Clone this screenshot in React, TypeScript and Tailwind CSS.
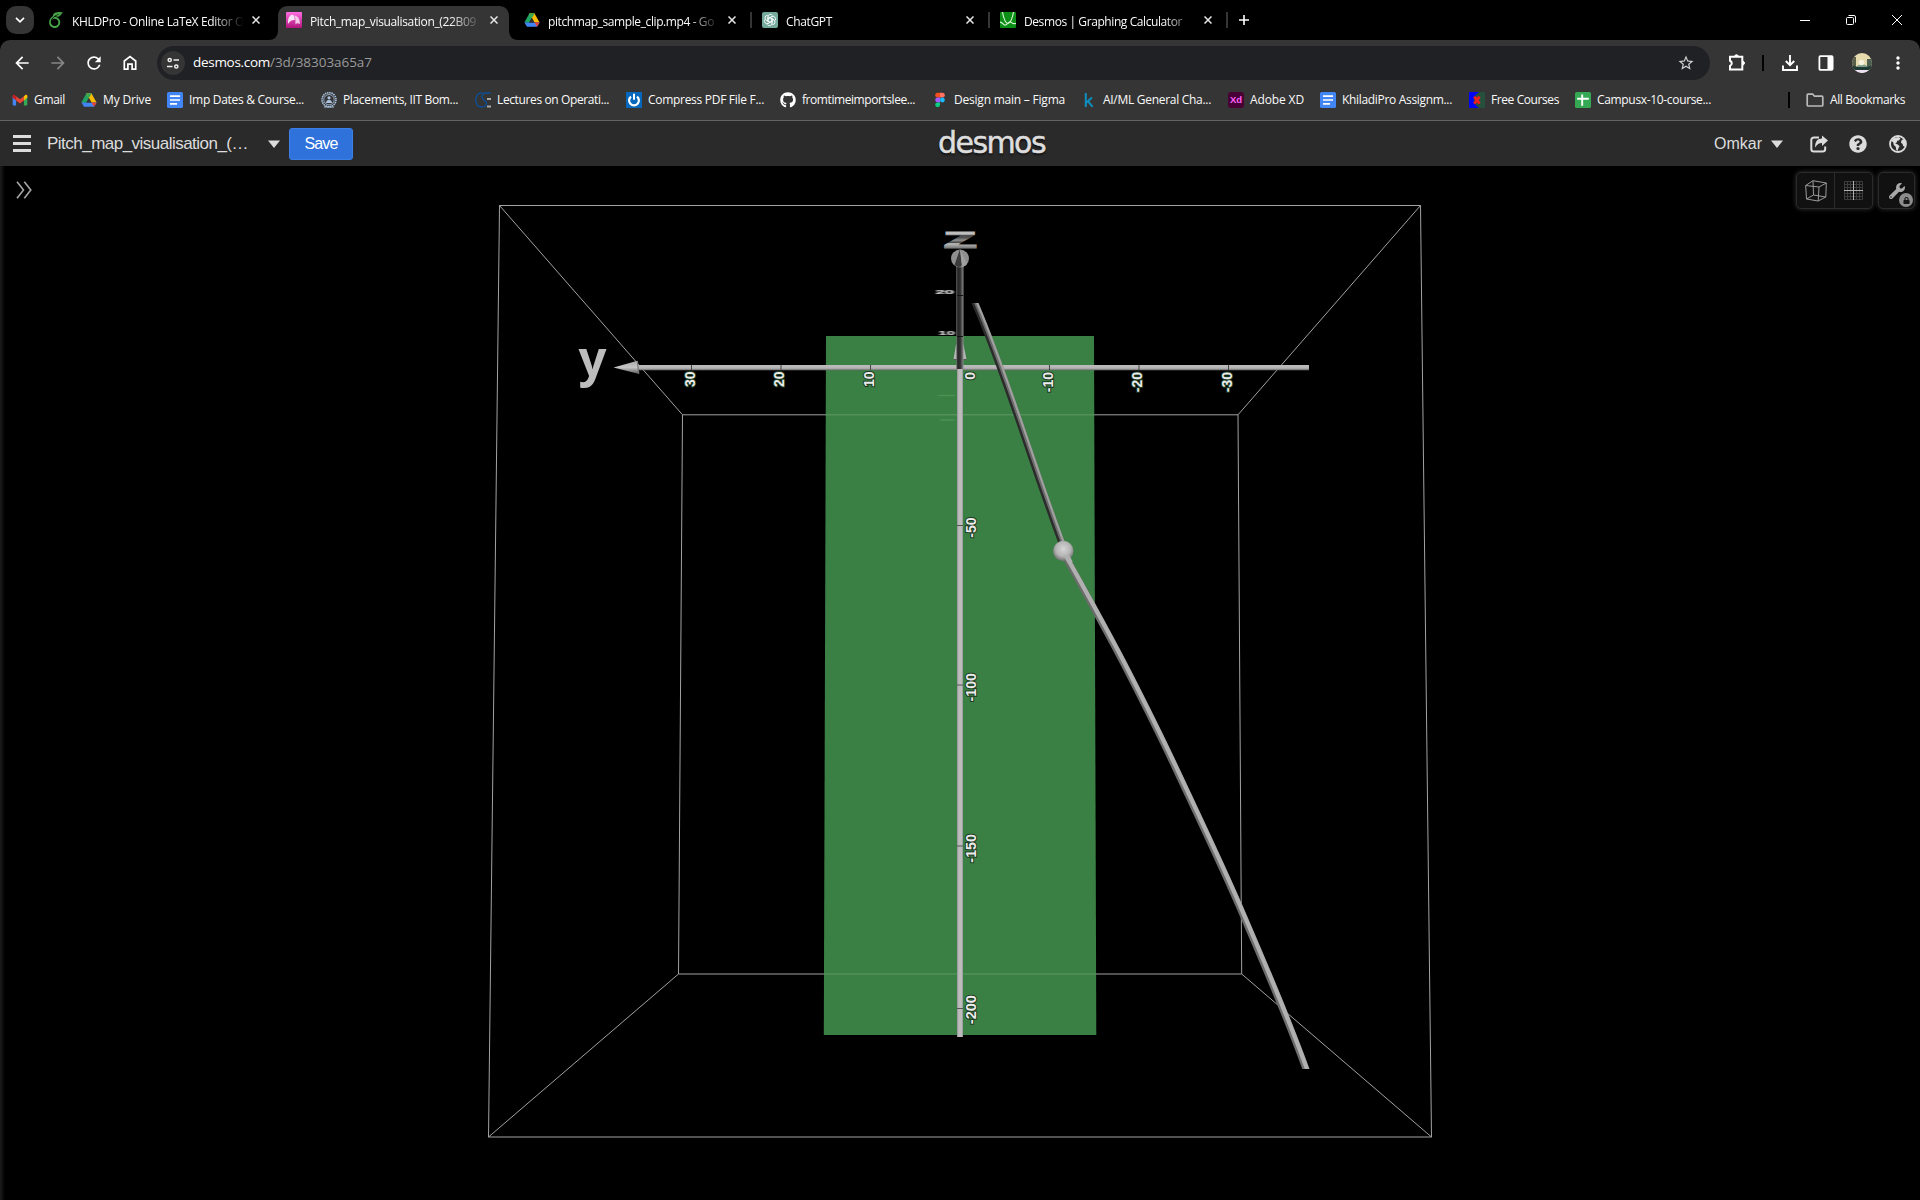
import React, { useLayoutEffect, useRef, useState } from "react";
import { FaGithub, FaQuestionCircle, FaGlobeAmericas, FaWrench, FaLock } from "react-icons/fa";
import { MdArrowBack, MdArrowForward, MdRefresh, MdStarBorder, MdMoreVert } from "react-icons/md";
import { SiOverleaf } from "react-icons/si";

/** Text whose tracking is tuned so that it fills exactly `w` pixels. */
function Fit({ text, w, className = "" }: { text: string; w: number; className?: string }) {
  const ref = useRef<HTMLSpanElement>(null);
  const [ls, setLs] = useState(0);
  useLayoutEffect(() => {
    if (ref.current) setLs((w - ref.current.getBoundingClientRect().width) / text.length);
  }, []);
  return (
    <span ref={ref} className={`inline-block shrink-0 whitespace-pre ${className}`} style={{ letterSpacing: `${ls}px` }}>
      {text}
    </span>
  );
}

function DriveIcon() {
  return (
    <svg viewBox="0 0 16 16" className="size-4">
      <path d="M5.3 1.5h5.2L5 10.8.4 10.6z" fill="#1fa463" />
      <path d="M5.3 1.5h5.2l-2.6 4.4z" fill="#188038" />
      <path d="M10.5 1.5 15.6 10.5h-5.2L5.3 1.5z" fill="#fbbc04" />
      <path d="M5.3 1.5h5.2L8 5.9z" fill="#34a853" />
      <path d="M3 14.8.4 10.5h15.2L13 14.8z" fill="#4285f4" />
      <path d="M10.4 10.5h5.2L13 14.8z" fill="#ea4335" />
      <path d="M5.6 10.5 8 6.2l2.4 4.3z" fill="#353535" />
    </svg>
  );
}

function GmailIcon() {
  return (
    <svg viewBox="0 0 16 16" className="size-4">
      <path d="M.7 4v8.6c0 .6.4 1 1 1h2.4V6.2z" fill="#4285f4" />
      <path d="M15.3 4v8.6c0 .6-.4 1-1 1h-2.4V6.2z" fill="#34a853" />
      <path d="M4.1 4.2v4.3L8 11.4l3.9-2.9V4.2L8 7.2z" fill="#ea4335" />
      <path d="M.7 3.8v1.9l3.4 2.8V4.2L3 3.2C2 2.4.7 2.8.7 3.8z" fill="#c5221f" />
      <path d="M15.3 3.8v1.9l-3.4 2.8V4.2L13 3.2c1-.8 2.3-.4 2.3.6z" fill="#fbbc04" />
    </svg>
  );
}

function DocsIcon() {
  return (
    <svg viewBox="0 0 16 16" className="size-4">
      <rect width="16" height="16" rx="1.6" fill="#4285f4" />
      <path d="M3 4.2h10M3 8h10M3 11.800h7" stroke="#fff" strokeWidth="1.700" />
    </svg>
  );
}

function EmblemIcon() {
  return (
    <svg viewBox="0 0 16 16" className="size-4" fill="none" stroke="#a9c3e0">
      <circle cx="8" cy="7.7" r="7" strokeWidth="1.6" strokeDasharray="1.5 .7" />
      <circle cx="8" cy="7.7" r="5.200" strokeWidth=".8" />
      <circle cx="8" cy="5.8" r="1.6" fill="#a9c3e0" stroke="none" />
      <path d="M5.500 10.500c.5-2.600 4.500-2.600 5 0zM3 15h10" fill="#a9c3e0" strokeWidth="1.1" />
    </svg>
  );
}

function CircuitIcon() {
  return (
    <svg viewBox="0 0 16 16" className="size-4" fill="none">
      <path d="M7.4 1C3 .6.7 4 .8 8c.1 4 2.400 7 6.400 7 3.600-.3 4.800-2.400 4.300-4.400C10.900 8.600 7 8.200 6.900 5c0-2.600 1.700-4 4.100-4h4.800" stroke="#0b4f9c" strokeWidth="1.300" />
      <path d="M12 7h4M12 14.600h4" stroke="#a9a9a9" strokeWidth="2" />
    </svg>
  );
}

function PowerIcon() {
  return (
    <svg viewBox="0 0 16 16" className="size-4" fill="none">
      <rect width="16" height="16" fill="#0668bd" />
      <path d="M5 4.600a4.900 4.900 0 1 0 6 0" stroke="#fff" strokeWidth="2.200" />
      <path d="M8 1.800v6" stroke="#fff" strokeWidth="2" />
    </svg>
  );
}

function FigmaIcon() {
  return (
    <svg viewBox="0 0 16 16" className="size-4">
      <path d="M8 .8H5.600a2.400 2.400 0 0 0 0 4.800H8z" fill="#f24e1e" />
      <path d="M8 .8h2.400a2.400 2.400 0 0 1 0 4.800H8z" fill="#ff7262" />
      <path d="M8 5.600H5.600a2.400 2.400 0 0 0 0 4.800H8z" fill="#a259ff" />
      <circle cx="10.400" cy="8" r="2.400" fill="#1abcfe" />
      <path d="M8 10.400H5.600A2.400 2.400 0 1 0 8 12.800z" fill="#0acf83" />
    </svg>
  );
}

function KaggleIcon() {
  return (
    <svg viewBox="0 0 16 16" className="size-4" fill="none" stroke="#0f8fbf" strokeWidth="2">
      <path d="M4.800 1v14M11 5.600 5.200 10.800M7 9.200l4.600 5.600" />
    </svg>
  );
}

function XdIcon() {
  return (
    <div className="flex size-4 items-center justify-center rounded-[3px] bg-[#470137] font-['Liberation_Sans'] text-[9.500px] leading-none font-bold text-[#ff61f6]">
      Xd
    </div>
  );
}

function CoursesIcon() {
  return (
    <svg viewBox="0 0 16 16" className="size-4">
      <rect width="16" height="16" fill="#24503c" />
      <path d="M0 0h10L6.500 3 4.500 8l2 5 3.500 3H0z" fill="#0206f5" />
      <path d="m5.200 4.600 5.400 7M10.600 4.600l-5.400 7" stroke="#ee2020" strokeWidth="2.700" />
    </svg>
  );
}

function SheetsIcon() {
  return (
    <svg viewBox="0 0 16 16" className="size-4">
      <rect width="16" height="16" rx="1.600" fill="#34a853" />
      <path d="M7.200 2.400v11.400M2.200 6.800h11.600" stroke="#fff" strokeWidth="1.900" />
    </svg>
  );
}

function LotusIcon() {
  return (
    <svg viewBox="0 0 16 16" className="size-4">
      <defs>
        <linearGradient id="lotus" x1="0" y1="0" x2="0" y2="1">
          <stop offset="0" stopColor="#ff6fe0" />
          <stop offset="1" stopColor="#b0147c" />
        </linearGradient>
      </defs>
      <rect width="16" height="16" rx="1" fill="url(#lotus)" />
      <path d="M2 12C1.600 6.500 3.500 3.200 6.200 2.800c2 0 2.300 2.400 2.600 5.400C6.600 7.600 4 8.600 2 12z" fill="#f9e3f4" />
      <path d="M8.300 3.600c3.600.4 5.400 3 5.700 8.400-1.900-1.200-3.400-.8-4.600.4 0-3 .5-6-1.100-8.800z" fill="#f4c9e9" />
    </svg>
  );
}

function GptIcon() {
  return (
    <svg viewBox="0 0 16 16" className="size-4" fill="none">
      <rect width="16" height="16" rx="2" fill="#74aa9c" />
      <g stroke="#fff" strokeWidth=".85">
        {[0, 60, 120, 180, 240, 300].map((a) => (
          <path key={a} transform={`rotate(${a} 8 8)`} d="M6 9.200V5a2.600 2.600 0 0 1 4.900-1.300M6 6.800 9.800 4.600" />
        ))}
      </g>
    </svg>
  );
}

function DesmosIcon() {
  return (
    <svg viewBox="0 0 16 16" className="size-4" fill="none">
      <rect width="16" height="16" rx="1" fill="#0b8f16" />
      <path d="M2.400 0C4 8 6 11.500 7.800 11.500S12 8 13.600 0" stroke="#d4f3cf" strokeWidth="1.200" />
      <path d="M0 10.200c3 0 3 3 5 3s3.400-3.400 5-3.400 2.200 3 6 1.600" stroke="#d4f3cf" strokeWidth="1.200" />
    </svg>
  );
}

const tabs = [
  { icon: <SiOverleaf className="size-4 text-[#46a247]" />, text: "KHLDPro - Online LaTeX Editor O", w: 172, sep: false },
  { icon: <LotusIcon />, text: "Pitch_map_visualisation_(22B09", w: 166, active: true, sep: false },
  { icon: <DriveIcon />, text: "pitchmap_sample_clip.mp4 - Go", w: 166, sep: true },
  { icon: <GptIcon />, text: "ChatGPT", w: 46, sep: true },
  { icon: <DesmosIcon />, text: "Desmos | Graphing Calculator", w: 158, sep: true },
];

function X() {
  return (
    <svg viewBox="0 0 8 8" className="size-2" stroke="#e8e8e8" strokeWidth="1.500">
      <path d="m.5.500 7 7m0-7-7 7" />
    </svg>
  );
}

function TabStrip() {
  return (
    <div className="flex h-10 items-start bg-black">
      <div className="flex w-10 pt-[6px] pl-[6px]">
        <div className="flex h-7 w-7 items-center justify-center rounded-[10px] bg-[#353535]">
          <svg viewBox="0 0 10 6" className="h-[6px] w-[10px]" fill="none" stroke="#fff" strokeWidth="1.700">
            <path d="m1 .8 4 4 4-4" />
          </svg>
        </div>
      </div>
      {tabs.map((t) => (
        <div key={t.text} className="relative h-10 w-[238px] shrink-0 pt-[6px]">
          {t.active && (
            <svg viewBox="0 0 252 34" className="absolute top-[6px] -left-[9px] h-[34px] w-[252px]">
              <path d="M0 34c6 0 9-4 9-10V10C9 4 13 0 19 0h211c6 0 10 4 10 10v14c0 6 3 10 9 10z" fill="#353535" />
            </svg>
          )}
          <div className="relative flex h-[28px] items-center pl-2">
            <span className="w-6 shrink-0">{t.icon}</span>
            <div className="w-[172px] [mask-image:linear-gradient(90deg,#000_140px,transparent_172px)]">
              <Fit text={t.text} w={t.w} className="text-[12px] leading-5 text-[#fafafa]" />
            </div>
            <span className="ml-2"><X /></span>
          </div>
          {t.sep && <span className="absolute top-[12px] right-[2px] h-4 w-[2px] bg-[#353535]" />}
        </div>
      ))}
      <div className="flex h-10 flex-1 items-center pl-[9px]">
        <svg viewBox="0 0 10 10" className="size-[10px]" stroke="#fff" strokeWidth="1.600">
          <path d="M5 0v10M0 5h10" />
        </svg>
      </div>
      <div className="flex h-10 items-center gap-9 pr-[18px]">
        <svg viewBox="0 0 10 10" className="size-[10px]" stroke="#fff"><path d="M0 5.500h10" /></svg>
        <svg viewBox="0 0 10 10" className="size-[10px]" stroke="#fff" fill="none">
          <rect x=".5" y="2.500" width="7" height="7" rx="1" />
          <path d="M2.500.500H8A1.500 1.500 0 0 1 9.500 2v5.500" />
        </svg>
        <svg viewBox="0 0 10 10" className="size-[10px]" stroke="#fff"><path d="m0 0 10 10M10 0 0 10" /></svg>
      </div>
    </div>
  );
}

function Toolbar() {
  return (
    <div className="-mt-px flex h-[47px] items-center">
      <div className="flex w-[157px] items-center pl-3 text-white">
        <MdArrowBack className="mr-4 size-5" />
        <MdArrowForward className="mr-4 size-5 text-[#868686]" />
        <MdRefresh className="mr-4 size-5" />
        <svg viewBox="0 0 20 20" className="size-5" fill="none" stroke="#fff" strokeWidth="1.700">
          <path d="M4.300 16.200V8L10 3.600 15.700 8v8.200h-3.600v-5H7.900v5z" />
        </svg>
      </div>
      <div className="flex h-[34px] w-[1553px] items-center rounded-full bg-[#202124]">
        <div className="ml-1 flex size-6 items-center justify-center rounded-full bg-[#353535]">
          <svg viewBox="0 0 12 12" className="size-3" fill="none" stroke="#eee" strokeWidth="1.500">
            <circle cx="2.700" cy="3" r="1.600" />
            <path d="M6.500 3H12M0 9.500h5.500" />
            <circle cx="9.300" cy="9.500" r="1.600" />
          </svg>
        </div>
        <Fit text="desmos.com" w={77} className="ml-2 text-[13.500px] text-white" />
        <Fit text="/3d/38303a65a7" w={102} className="text-[13.500px] text-[#9a9a9a]" />
        <MdStarBorder className="mr-[15px] ml-auto size-[18px] text-[#d0d0d0]" />
      </div>
      <div className="flex flex-1 items-center pl-[17px]">
        <svg viewBox="0 0 20 20" className="size-5" fill="none" stroke="#fff" strokeWidth="2">
          <path d="M3 3.800h12.300v12.700H3v-3.600a2.800 2.800 0 0 0 0-5.200z" />
          <path d="M7.600 3.200a1.900 1.900 0 0 1 3.700 0zM16 8.200a1.900 1.900 0 0 1 0 3.700z" fill="#fff" strokeWidth="1" />
        </svg>
        <span className="ml-[15px] h-4 w-[2px] bg-black" />
        <svg viewBox="0 0 16 16" className="ml-[18px] size-4" fill="none" stroke="#fff" strokeWidth="1.900">
          <path d="M8 0v10M3.800 6 8 10.200 12.200 6M1 10.500V15h14v-4.500" />
        </svg>
        <svg viewBox="0 0 16 16" className="ml-5 size-4" fill="none" stroke="#fff" strokeWidth="1.800">
          <rect x="1.400" y="1.200" width="13.200" height="13.600" rx="1" />
          <rect x="9.500" y="1" width="5" height="14" fill="#fff" stroke="none" />
        </svg>
        <svg viewBox="0 0 20 20" className="ml-[18px] size-5">
          <defs>
            <clipPath id="avatar"><circle cx="10" cy="10" r="10" /></clipPath>
          </defs>
          <g clipPath="url(#avatar)">
            <rect width="20" height="20" fill="#e5d9ae" />
            <rect y="4" width="4" height="11" fill="#5a5f49" />
            <rect x="15" y="6" width="5" height="9" fill="#4c5f50" />
            <path d="M4 15c1-5 11-5 12 0z" fill="#7f9f8a" />
            <circle cx="9.500" cy="9.500" r="2.800" fill="#f6f0dc" />
            <path d="M0 12.500c5 2 15 2 20 0v4.500H0z" fill="#1f3a34" />
            <path d="M0 17h20v3H0z" fill="#ecdff2" />
          </g>
        </svg>
        <MdMoreVert className="ml-4 size-5 text-white" />
      </div>
    </div>
  );
}

const bookmarks = [
  { icon: <GmailIcon />, text: "Gmail", w: 31, box: "w-[69px]" },
  { icon: <DriveIcon />, text: "My Drive", w: 48, box: "w-[86px]" },
  { icon: <DocsIcon />, text: "Imp Dates & Course...", w: 115, box: "w-[154px]" },
  { icon: <EmblemIcon />, text: "Placements, IIT Bom...", w: 115, box: "w-[154px]" },
  { icon: <CircuitIcon />, text: "Lectures on Operati...", w: 112, box: "w-[151px]" },
  { icon: <PowerIcon />, text: "Compress PDF File F...", w: 116, box: "w-[154px]" },
  { icon: <FaGithub className="size-4 text-white" />, text: "fromtimeimportslee...", w: 113, box: "w-[152px]" },
  { icon: <FigmaIcon />, text: "Design main – Figma", w: 111, box: "w-[149px]" },
  { icon: <KaggleIcon />, text: "AI/ML General Cha...", w: 108, box: "w-[147px]" },
  { icon: <XdIcon />, text: "Adobe XD", w: 54, box: "w-[92px]" },
  { icon: <DocsIcon />, text: "KhiladiPro Assignm...", w: 110, box: "w-[149px]" },
  { icon: <CoursesIcon />, text: "Free Courses", w: 68, box: "w-[106px]" },
  { icon: <SheetsIcon />, text: "Campusx-10-course...", w: 114, box: "w-[140px]" },
];

function Bookmarks() {
  return (
    <div className="flex h-[34px] items-center border-b border-[#636363] pb-[7px] pl-3">
      {bookmarks.map((b) => (
        <div key={b.text} className={`flex shrink-0 items-center gap-[6px] ${b.box}`}>
          <span className="shrink-0">{b.icon}</span>
          <Fit text={b.text} w={b.w} className="text-[12px] leading-4 text-[#fafafa]" />
        </div>
      ))}
      <span className="ml-auto h-4 w-[2px] bg-black" />
      <svg viewBox="0 0 18 16" className="ml-4 h-4 w-[18px]" fill="none" stroke="#b9b9b9" strokeWidth="1.700">
        <path d="M1.200 13V3.200c0-.6.400-1 1-1h4.500l1.800 2h7.300c.6 0 1 .4 1 1V13c0 .6-.4 1-1 1H2.200c-.6 0-1-.4-1-1z" />
      </svg>
      <Fit text="All Bookmarks" w={75} className="mr-[15px] ml-[6px] text-[12px] leading-4 text-[#fafafa]" />
    </div>
  );
}

function Caret() {
  return (
    <svg viewBox="0 0 12 8" className="h-2 w-3"><path d="M0 .500h12L6 8z" fill="#dcdcdc" /></svg>
  );
}

function DesmosHeader() {
  return (
    <div className="grid h-[45px] grid-cols-3 items-center bg-[#2a2a2a] font-['Liberation_Sans',sans-serif] text-[#dcdcdc]">
      <div className="flex items-center pl-[13px]">
        <div className="flex w-[18px] flex-col gap-1">
          <span className="h-[3px] bg-[#dcdcdc]" />
          <span className="h-[3px] bg-[#dcdcdc]" />
          <span className="h-[3px] bg-[#dcdcdc]" />
        </div>
        <Fit text="Pitch_map_visualisation_(…" w={201} className="ml-4 text-[17px]" />
        <span className="ml-[20px]"><Caret /></span>
        <div className="ml-[9px] flex h-8 w-16 items-center justify-center rounded-[3px] border border-[#3b80e6] bg-[#2f72dc] text-[16px] text-white">
          <Fit text="Save" w={33} />
        </div>
      </div>
      <div className="flex justify-center">
        <Fit
          text="desmos"
          w={107}
          className="-mt-[1px] ml-[63px] font-['DejaVu_Sans'] text-[30px] leading-[38px] text-[#dedede] [-webkit-text-stroke:0.500px_#dedede] [text-shadow:0_2px_2px_#111]"
        />
      </div>
      <div className="flex items-center justify-end pr-[13px]">
        <Fit text="Omkar" w={48} className="text-[16px]" />
        <span className="ml-[9px]"><Caret /></span>
        <svg viewBox="0 0 18 18" className="ml-[27px] size-[18px]" fill="none">
          <path d="M9 2.500H4C2.300 2.500 1.300 3.500 1.300 5v9c0 1.500 1 2.500 2.700 2.500h8.500c1.700 0 2.700-1 2.700-2.500v-2.500" stroke="#dcdcdc" strokeWidth="2" />
          <path d="M18 5.600 12 .400v3C7.500 3.500 4.700 6.500 5.200 12.600 7 9.400 9 8 12 8v3z" fill="#dcdcdc" />
        </svg>
        <FaQuestionCircle className="ml-[21px] size-[18px]" />
        <svg viewBox="0 0 18 18" className="ml-[22px] size-[18px]">
          <circle cx="9" cy="9" r="8" fill="none" stroke="#dcdcdc" strokeWidth="1.800" />
          <path d="M4 3.200 9.500 2l2 1.600-1.600 1.800-1.700.4-.5 1.800-1.500.8 2.600 1.200 1.800 1.700-1.200 2-.8 2.700-1.400-1.300-.5-3-1.900-1.800-.6-2.600L2.600 6z" fill="#dcdcdc" />
          <path d="m12.800 4.800 2.600-.6 1.300 4-.7 3.600-1.900-.8-.5-2-1.700-1.400z" fill="#dcdcdc" />
        </svg>
      </div>
    </div>
  );
}

function TickLabel({ x, y, text, size = 14 }: { x: number; y: number; text: string; size?: number }) {
  return (
    <text
      transform={`translate(${x + 4.200} ${y}) rotate(-90)`}
      textAnchor="end"
      fontFamily="Liberation Sans"
      fontWeight="700"
      fontSize={size}
      fill="#ececec"
      stroke="#1d3a22"
      strokeWidth="2"
      paintOrder="stroke"
    >
      {text}
    </text>
  );
}

const LOWER = "M1064 554C1085 592 1107 631 1126 668S1160 735 1175 767S1222 866 1240 908S1285 1011 1307 1072";

function Scene() {
  return (
    <svg viewBox="0 166 1920 1034" className="block h-full w-full">
      <defs>
        <linearGradient id="rodH" x1="0" y1="0" x2="0" y2="1">
          <stop offset="0" stopColor="#bdbcbc" />
          <stop offset=".6" stopColor="#b5b4b4" />
          <stop offset="1" stopColor="#666" />
        </linearGradient>
        <linearGradient id="rodV" x1="0" y1="0" x2="1" y2="0">
          <stop offset="0" stopColor="#929292" />
          <stop offset=".3" stopColor="#bebdbd" />
          <stop offset=".75" stopColor="#bcbbbb" />
          <stop offset="1" stopColor="#929292" />
        </linearGradient>
        <linearGradient id="rodZ" x1="0" y1="0" x2="1" y2="0">
          <stop offset="0" stopColor="#777" />
          <stop offset=".2" stopColor="#252525" />
          <stop offset=".55" stopColor="#303030" />
          <stop offset="1" stopColor="#8c8c8c" />
        </linearGradient>
        <linearGradient id="zed" gradientUnits="userSpaceOnUse" x1="0" y1="-16.500" x2="0" y2="0">
          <stop offset="0" stopColor="#b4b4b4" />
          <stop offset=".18" stopColor="#c4c4c4" />
          <stop offset=".27" stopColor="#4a4a4a" />
          <stop offset=".4" stopColor="#505050" />
          <stop offset=".55" stopColor="#8f8f8f" />
          <stop offset=".7" stopColor="#484848" />
          <stop offset=".76" stopColor="#bdbdbd" />
          <stop offset="1" stopColor="#808080" />
        </linearGradient>
        <radialGradient id="ball" cx=".5" cy=".4" r=".6">
          <stop offset="0" stopColor="#d6d6d6" />
          <stop offset=".6" stopColor="#b4b4b4" />
          <stop offset="1" stopColor="#6c6c6c" />
        </radialGradient>
        <linearGradient id="coneY" x1="0" y1="0" x2="0" y2="1">
          <stop offset="0" stopColor="#a9a9a9" />
          <stop offset=".5" stopColor="#c6c6c6" />
          <stop offset="1" stopColor="#555" />
        </linearGradient>
        <linearGradient id="edge" x1="0" y1="0" x2="1" y2="0">
          <stop offset="0" stopColor="#1c1c1c" />
          <stop offset="1" stopColor="#000" />
        </linearGradient>
        <clipPath id="throw">
          <rect x="900" y="303" width="500" height="766" />
        </clipPath>
        <filter id="smear" x="-20%" y="-60%" width="140%" height="220%">
          <feGaussianBlur stdDeviation=".9 .3" />
        </filter>
      </defs>

      <rect y="166" width="5" height="1034" fill="url(#edge)" />

      <g stroke="#a2a2a2" strokeWidth="1" fill="none">
        <path d="M499.500 205.500H1420.500L1431.500 1137H488.500z" />
        <path d="M682.500 414.800H1238L1241.700 974H678.500z" />
        <path d="M499.500 205.500 682.500 414.800M1420.500 205.500 1238 414.800M488.500 1137 678.500 974M1431.500 1137 1241.700 974" />
      </g>

      <path d="M826 336H1094L1096.300 1035H823.800z" fill="#3a7f43" />
      <path d="M825.600 414.800H1094.300M824 974H1096" stroke="#52915a" strokeWidth="1.400" />
      <path d="M938 395.500h17M940 420h15" stroke="#5a9d61" strokeWidth="1.300" opacity=".6" filter="url(#smear)" />

      <path d="M956 344.500h7.500L966.500 359.500H953.500z" fill="#b5b5b5" />
      <path d="M953.500 359.500h13" stroke="#555" />
      <rect x="636" y="365" width="673" height="5.300" fill="url(#rodH)" />
      <path d="M613.500 367.500 637.500 360.800 639 374z" fill="url(#coneY)" />
      <path d="M637.300 361l1.500 12.800" stroke="#777" strokeWidth="1.200" />
      <path d="M691.500 365v5M781 365v5M870.500 365v5M1049.500 365v5M1139 365v5M1228.500 365v5" stroke="#444" strokeWidth="1" />
      <rect x="957" y="368" width="6" height="669" fill="url(#rodV)" />
      <path d="M957 525.500h6M957 685h6M957 846h6M957 1008.500h6" stroke="#555" strokeWidth="1" />

      <rect x="956.300" y="262" width="7.200" height="107" fill="url(#rodZ)" />
      <path d="M957 295.500h6M957 336.500h6" stroke="#111" />
      <circle cx="960" cy="258.500" r="9" fill="#8f8f8f" />
      <path d="M960 249 954.500 265q5.500 4 7.500 0z" fill="#3b3b3b" />
      <path d="M960 249 962 267q4-1 5-3z" fill="#9f9f9f" />

      <text
        transform="translate(942.300 247.600) scale(2.050 1)"
        fontFamily="Liberation Sans"
        fontWeight="700"
        fontSize="30"
        textLength="17.500"
        lengthAdjust="spacingAndGlyphs"
        fill="url(#zed)"
        stroke="url(#zed)"
        strokeWidth=".9"
      >
        z
      </text>
      <text x="578.500" y="375.500" fontFamily="Noto Sans" fontWeight="700" fontSize="49" fill="#bdbdbd">
        y
      </text>
      <g fontFamily="Liberation Sans" fontWeight="700" fontSize="14" fill="#d8d8d8" stroke="#d8d8d8" strokeWidth=".4" filter="url(#smear)">
        <text transform="translate(935.500 294.200) scale(1.200 .4)">20</text>
        <text transform="translate(938.500 335) scale(1.050 .35)">10</text>
      </g>

      <TickLabel x={690.500} y={371.500} text="30" />
      <TickLabel x={780} y={371.500} text="20" />
      <TickLabel x={870} y={371.500} text="10" />
      <TickLabel x={971} y={372} text="0" />
      <TickLabel x={1048.500} y={372} text="-10" />
      <TickLabel x={1138} y={372} text="-20" />
      <TickLabel x={1227.500} y={372} text="-30" />
      <TickLabel x={971.500} y={517.500} text="-50" />
      <TickLabel x={971.500} y={673} text="-100" size={14.200} />
      <TickLabel x={971.500} y={834} text="-150" size={14.300} />
      <TickLabel x={971.500} y={995} text="-200" size={14.600} />

      <g fill="none" clipPath="url(#throw)">
        <path d="M973 299C990 338 1009 392 1026 442S1052 518 1063 547" stroke="#2b2b2b" strokeWidth="6" />
        <path d="M974.500 299C991.500 338 1010.500 392 1027.500 442S1053.500 518 1064.500 547" stroke="#6b6b6b" strokeWidth="4" />
        <path d="M975.500 299C992.500 338 1011.500 392 1028.500 442S1054.500 518 1065.500 547" stroke="#a0a0a0" strokeWidth="2.200" />
        <path d={LOWER} stroke="#6c6c6c" strokeWidth="6.800" />
        <path d={LOWER} transform="translate(1 -.3)" stroke="#b0b0b0" strokeWidth="4.300" />
      </g>
      <circle cx="1063.300" cy="551" r="10.200" fill="url(#ball)" />
      <path d="M1066.500 555.500 1070.500 563" stroke="#b0b0b0" strokeWidth="5" />
    </svg>
  );
}

function GraphButtons() {
  return (
    <div className="absolute top-[6px] right-[5px] flex gap-[5px]">
      <div className="flex h-[37px] rounded-[5px] border border-[#2b2b2b] bg-[#111] shadow-[0_0_5px_#333]">
        <div className="flex w-[38px] items-center justify-center border-r border-[#2b2b2b]">
          <svg viewBox="0 0 22 22" className="size-[22px]" fill="none" stroke="#9b9b9b" strokeWidth="1">
            <path d="M.700 5.500 14 7l-.8 14L1.500 19zM8 .700 21.300 3l-.5 14L8.500 15zM.700 5.500 8 .700M14 7l7.300-4M13.200 21l7.600-4M1.500 19l7-4" />
          </svg>
        </div>
        <div className="flex w-[37px] items-center justify-center">
          <svg viewBox="0 0 19 19" className="size-[19px]" fill="none" stroke="#3d3d3d">
            <path d="M.500.500h18v18H.500zM3.500.500v18M6.500.500v18M12.500.500v18M15.500.500v18M.500 3.500h18M.500 6.500h18M.500 12.500h18M.500 15.500h18" />
            <path d="M9.500 0v19M0 9.500h19" stroke="#b0b0b0" />
          </svg>
        </div>
      </div>
      <div className="relative flex h-[37px] w-[37px] items-center justify-center rounded-[5px] border border-[#2b2b2b] bg-[#111] shadow-[0_0_5px_#333]">
        <FaWrench className="size-[16px] text-[#a9a9a9]" />
        <span className="absolute right-[1px] bottom-[1px] flex size-[14px] items-center justify-center rounded-full bg-[#8d8d8d]">
          <FaLock className="size-[7px] text-[#151515]" />
        </span>
      </div>
    </div>
  );
}

export default function App() {
  return (
    <div className="flex h-[1200px] w-[1920px] flex-col overflow-hidden bg-black font-['Open_Sans',sans-serif]">
      <TabStrip />
      <div className="flex h-[81px] flex-col rounded-t-[10px] bg-[#353535]">
        <Toolbar />
        <div className="mt-px">
          <Bookmarks />
        </div>
      </div>
      <DesmosHeader />
      <div className="relative flex-1">
        <Scene />
        <svg viewBox="0 0 16 18" className="absolute top-[15px] left-[15.500px] h-[18px] w-4" fill="none" stroke="#a6a6a6" strokeWidth="1.600">
          <path d="m1 .700 6.500 8.300L1 17.300M8.300.700l6.500 8.300-6.500 8.300" />
        </svg>
        <GraphButtons />
      </div>
    </div>
  );
}
